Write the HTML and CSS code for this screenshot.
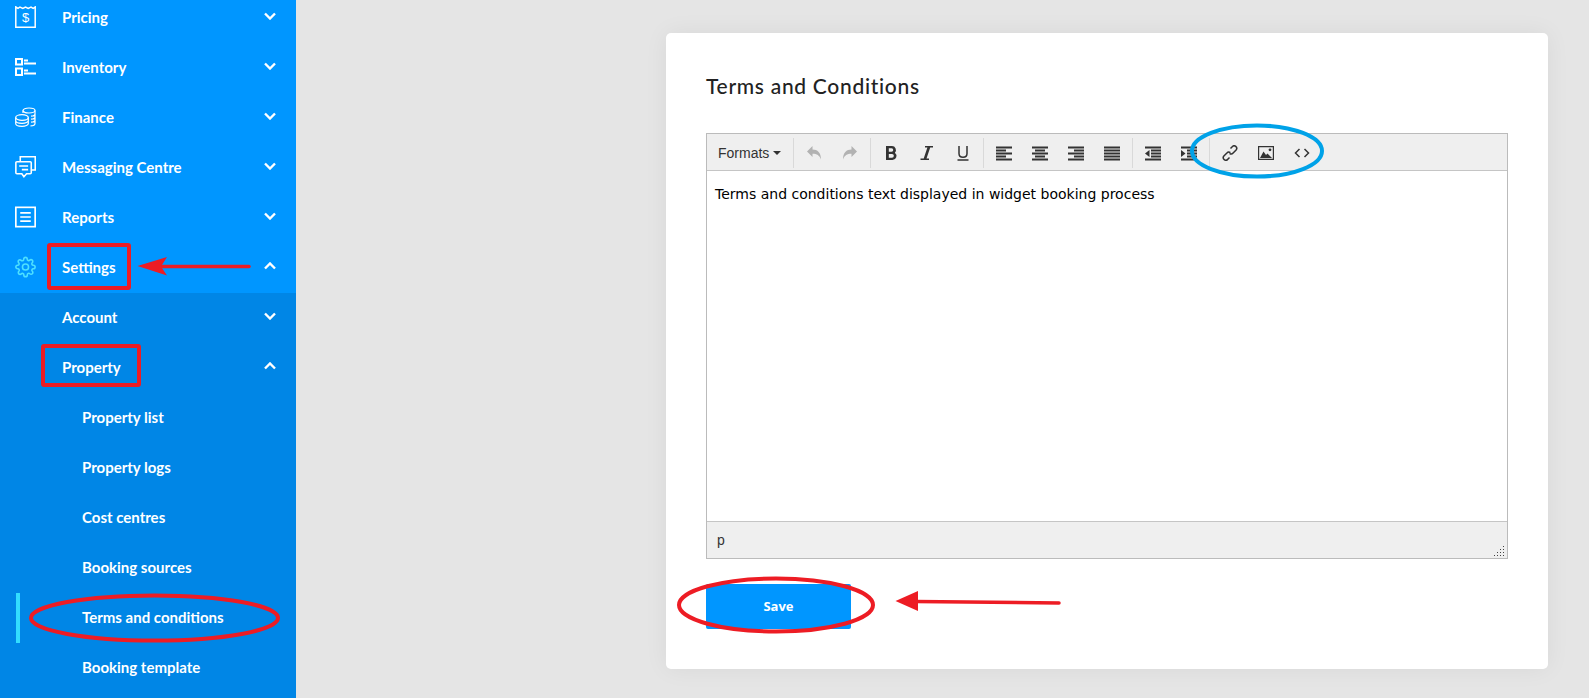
FILE: index.html
```html
<!DOCTYPE html>
<html lang="en">
<head>
<meta charset="utf-8">
<title>Terms and Conditions</title>
<link rel="stylesheet" href="styles.css">
</head>
<body>
<svg class="defs" width="0" height="0" aria-hidden="true">
  <symbol id="chev-down" viewBox="0 0 12 8"><path d="M1 1.500l5 5 5-5" fill="none" stroke="#fff" stroke-width="2.400"/></symbol>
  <symbol id="chev-up" viewBox="0 0 12 8"><path d="M1 6.500l5-5 5 5" fill="none" stroke="#fff" stroke-width="2.400"/></symbol>
</svg>
<div class="app">
  <nav class="sidebar">
    <ul class="menu">
      <li class="row">
        <svg class="ico" viewBox="0 0 21 22" fill="none" stroke="#fff" stroke-width="1.500"><path d="M.8 1l2.200 1.400L5 1l2.800 1.400L10.500 1l2.700 1.400L16 1l2.200 1.400L20.200 1v20.200H.8z"/><text x="10.500" y="15.500" class="dollar">$</text></svg>
        <span>Pricing</span><svg class="chev"><use href="#chev-down"/></svg>
      </li>
      <li class="row">
        <svg class="ico" viewBox="0 0 21 18" fill="none" stroke="#fff" stroke-width="2"><rect x="1" y="1" width="6" height="5.500"/><rect x="1" y="10.500" width="6" height="6.500"/><path d="M9 2.500h4M9 5.500h12M9 12.500h4M9 15.500h12"/></svg>
        <span>Inventory</span><svg class="chev"><use href="#chev-down"/></svg>
      </li>
      <li class="row">
        <svg class="ico" viewBox="0 0 21 19" fill="none" stroke="#fff" stroke-width="1.200"><ellipse cx="14" cy="3" rx="6" ry="2.500"/><path d="M20 3v13c0 1.500-2 2.400-4.500 2.400M8 5.400V3M20 6.500c0 1-1.500 2-4 2.200M20 9.500c0 1-1.500 2-4 2.200M20 12.500c0 1-1.500 2-4 2.200"/><ellipse cx="7" cy="10" rx="6.300" ry="2.800"/><path d="M.7 10v6c0 1.600 2.800 2.800 6.300 2.800s6.300-1.200 6.300-2.800v-6M.7 13c0 1.600 2.800 2.800 6.300 2.800s6.300-1.200 6.300-2.800"/></svg>
        <span>Finance</span><svg class="chev"><use href="#chev-down"/></svg>
      </li>
      <li class="row">
        <svg class="ico" viewBox="0 0 20 21" fill="none" stroke="#fff" stroke-width="1.500"><path d="M5 5V.8h14.300v12.500H16"/><path d="M1.800 5.500h12.700a1 1 0 0 1 1 1v9.500a1 1 0 0 1-1 1H11l-2.500 2.800L6.500 17H1.800a1 1 0 0 1-1-1V6.500a1 1 0 0 1 1-1z"/><path d="M4 9.500h8.500M6.500 13h6"/></svg>
        <span>Messaging Centre</span><svg class="chev"><use href="#chev-down"/></svg>
      </li>
      <li class="row">
        <svg class="ico" viewBox="0 0 20 20" fill="none" stroke="#fff" stroke-width="1.600"><rect x=".8" y=".8" width="18.400" height="18.400"/><path d="M5 6h10M5 10h10M5 14h10"/></svg>
        <span>Reports</span><svg class="chev"><use href="#chev-down"/></svg>
      </li>
      <li class="row">
        <svg class="ico" viewBox="0 0 24 24" fill="none" stroke="#4de0ff" stroke-width="1.800"><circle cx="12" cy="12" r="3.500"/><path d="M19.400 15a1.650 1.650 0 0 0 .33 1.820l.06.06a2 2 0 1 1-2.830 2.830l-.06-.06a1.650 1.650 0 0 0-2.820 1.170V21a2 2 0 1 1-4 0v-.09a1.650 1.650 0 0 0-2.820-1.170l-.06.06a2 2 0 1 1-2.830-2.830l.06-.06a1.650 1.650 0 0 0-1.170-2.820H3a2 2 0 1 1 0-4h.09a1.650 1.650 0 0 0 1.170-2.820l-.06-.06a2 2 0 1 1 2.830-2.830l.06.06a1.650 1.650 0 0 0 1.820.33H9a1.650 1.650 0 0 0 1-1.510V3a2 2 0 1 1 4 0v.09a1.650 1.650 0 0 0 2.820 1.170l.06-.06a2 2 0 1 1 2.830 2.830l-.06.06a1.650 1.650 0 0 0-.33 1.820V9a1.650 1.650 0 0 0 1.510 1H21a2 2 0 1 1 0 4h-.09a1.650 1.650 0 0 0-1.510 1z"/></svg>
        <span>Settings</span><svg class="chev"><use href="#chev-up"/></svg>
      </li>
    </ul>
    <ul class="submenu">
      <li class="row sub"><span>Account</span><svg class="chev"><use href="#chev-down"/></svg></li>
      <li class="row sub"><span>Property</span><svg class="chev"><use href="#chev-up"/></svg></li>
      <li class="row leaf"><span>Property list</span></li>
      <li class="row leaf"><span>Property logs</span></li>
      <li class="row leaf"><span>Cost centres</span></li>
      <li class="row leaf"><span>Booking sources</span></li>
      <li class="row leaf active"><span>Terms and conditions</span></li>
      <li class="row leaf"><span>Booking template</span></li>
    </ul>
  </nav>
  <main class="main">
    <section class="card">
      <h1 class="title">Terms and Conditions</h1>
      <div class="editor">
        <div class="toolbar">
          <div class="group formats"><span>Formats</span><i class="caret"></i></div>
          <div class="group">
            <span class="btn"><svg class="ti" viewBox="0 0 16 16" fill="#b2b2b2"><path d="M1 6.500L6.500 1v3.500C11.500 4.500 15 7.500 15 14.500c-1.500-4-4-5.700-8.500-5.700V12z"/></svg></span>
            <span class="btn"><svg class="ti" viewBox="0 0 16 16" fill="#b2b2b2"><path d="M15 6.500L9.500 1v3.500C4.500 4.500 1 7.500 1 14.500c1.500-4 4-5.700 8.500-5.700V12z"/></svg></span>
          </div>
          <div class="group">
            <span class="btn"><svg class="ti" viewBox="0 0 16 16" fill="#333"><path fill-rule="evenodd" d="M3 1h6a4 4 0 0 1 2.900 6.700A4.100 4.100 0 0 1 9.500 15H3zM5.800 3.300v3.500H8.500a1.750 1.750 0 0 0 0-3.500zM5.800 9v3.700H9a1.850 1.850 0 0 0 0-3.700z"/></svg></span>
            <span class="btn"><svg class="ti" viewBox="0 0 16 16" fill="#333"><path d="M6 1h8v1.500h-2.800L7.500 13.500H10V15H1.500v-1.500h3.200L8.400 2.500H6z"/></svg></span>
            <span class="btn"><svg class="ti" viewBox="0 0 16 16" fill="none" stroke="#333" stroke-width="1.500"><path d="M4 1v7.500c0 5 8 5 8 0V1M2.500 15h11"/></svg></span>
          </div>
          <div class="group">
            <span class="btn"><svg class="ti" viewBox="0 0 16 16"><path class="ln" d="M0 2.500h16M0 5.500h10M0 8.500h16M0 11.500h10M0 14.500h16"/></svg></span>
            <span class="btn"><svg class="ti" viewBox="0 0 16 16"><path class="ln" d="M0 2.500h16M3 5.500h10M0 8.500h16M3 11.500h10M0 14.500h16"/></svg></span>
            <span class="btn"><svg class="ti" viewBox="0 0 16 16"><path class="ln" d="M0 2.500h16M6 5.500h10M0 8.500h16M6 11.500h10M0 14.500h16"/></svg></span>
            <span class="btn"><svg class="ti" viewBox="0 0 16 16"><path class="ln" d="M0 2.500h16M0 5.500h16M0 8.500h16M0 11.500h16M0 14.500h16"/></svg></span>
          </div>
          <div class="group">
            <span class="btn"><svg class="ti" viewBox="0 0 16 16"><path class="ln" d="M0 2.500h16M6 5.500h10M6 8.500h10M6 11.500h10M0 14.500h16"/><path d="M4.500 5v7L0 8.500z" fill="#333"/></svg></span>
            <span class="btn"><svg class="ti" viewBox="0 0 16 16"><path class="ln" d="M0 2.500h16M6 5.500h10M6 8.500h10M6 11.500h10M0 14.500h16"/><path d="M0 5v7l4.500-3.500z" fill="#333"/></svg></span>
          </div>
          <div class="group">
            <span class="btn"><svg class="ti" viewBox="0 0 16 16" fill="none" stroke="#333" stroke-width="1.500"><path d="M8.500 3.500l1.700-1.700a2.500 2.500 0 0 1 3.900 3.200l-3 3a2.500 2.500 0 0 1-3.500.3"/><path d="M7.500 12.500l-1.700 1.700a2.500 2.500 0 0 1-3.900-3.200l3-3a2.500 2.500 0 0 1 3.500-.3"/></svg></span>
            <span class="btn"><svg class="ti" viewBox="0 0 16 16"><path fill-rule="evenodd" fill="#333" d="M0 1h16v14H0zM1.200 2.200v11.600h13.600V2.200z"/><path fill="#333" d="M2 13l3.500-6.500L8 10l1.500-1.500L14 13z"/><circle cx="12" cy="4.800" r="1.400" fill="#333"/></svg></span>
            <span class="btn"><svg class="ti" viewBox="0 0 16 16" fill="none" stroke="#333" stroke-width="1.500"><path d="M5.500 4L1.500 8l4 4M10.500 4l4 4-4 4"/></svg></span>
          </div>
        </div>
        <div class="content">Terms and conditions text displayed in widget booking process</div>
        <div class="statusbar"><span>p</span><i class="grip"></i></div>
      </div>
      <button class="save" type="button">Save</button>
    </section>
  </main>
</div>
<svg class="marks" viewBox="0 0 1589 698" width="1589" height="698" aria-hidden="true">
  <g fill="none" stroke="#ed1c24" stroke-width="4">
    <rect x="49" y="245" width="80" height="43" rx="1"/>
    <rect x="43" y="346" width="96" height="39" rx="1"/>
    <ellipse cx="154.500" cy="618" rx="123.500" ry="22.500"/>
    <ellipse cx="776" cy="605" rx="97" ry="26.500"/>
  </g>
  <g fill="none" stroke="#ed1c24" stroke-width="3.500" stroke-linecap="round">
    <path d="M160 266.500H249"/>
    <path d="M915 601.500L1059 603"/>
  </g>
  <path d="M137.500 266L167 257l-6 9.500 6 9z" fill="#ed1c24"/>
  <path d="M895.500 601L918 591v20z" fill="#ed1c24"/>
  <ellipse cx="1257" cy="151" rx="65" ry="25.500" fill="none" stroke="#00a2e8" stroke-width="4"/>
</svg>
</body>
</html>
```
FILE: styles.css
```css
* { box-sizing: border-box; }
html, body { margin: 0; height: 698px; overflow: hidden; background: #e5e5e5; }
body { position: relative; font-family: "Lato", "Liberation Sans", sans-serif; }
.defs { position: absolute; }
.app { display: flex; height: 698px; }

.sidebar { width: 296px; flex: none; height: 698px; overflow: hidden; background: #0096ff; color: #fff; }
.menu, .submenu { list-style: none; margin: 0; padding: 0; }
.menu { margin-top: -7px; }
.submenu { background: #0086e6; height: 420px; }
.row { position: relative; display: flex; align-items: center; height: 50px; font-size: 15px; font-weight: 700; padding-right: 20px; }
.row > span { flex: 1; padding-bottom: 2px; }
.ico { width: 21px; height: 22px; margin: -2px 26px 0 15px; flex: none; }
.dollar { font: 400 13px "Liberation Sans", sans-serif; fill: #fff; stroke: none; text-anchor: middle; }
.chev { width: 12px; height: 8px; flex: none; margin-top: -5px; }
.sub { padding-left: 62px; }
.leaf { padding-left: 82px; }
.active::before { content: ""; position: absolute; left: 16px; top: 0; bottom: 0; width: 4px; background: #33ddff; }

.main { flex: 1; padding: 33px 43px 29px 370px; }
.card { height: 636px; background: #fff; border-radius: 5px; box-shadow: 0 0 24px rgba(0, 0, 0, .06); padding: 40px 40px 40px; }
.title { margin: 0 0 34px; font-size: 21px; letter-spacing: .7px; line-height: 26px; font-weight: 500; color: #222; font-family: "Lato", sans-serif; }

.editor { width: 802px; border: 1px solid #bbb; background: #fff; display: flex; flex-direction: column; height: 426px; }
.toolbar { display: flex; align-items: center; height: 37px; padding-top: 1px; background: #efefef; border-bottom: 1px solid #c5c5c5; flex: none; }
.group { display: flex; align-items: center; height: 30px; padding: 0 2px; border-left: 1px solid #d9d9d9; }
.formats { width: 86px; border-left: 0; padding-left: 11px; font: 14px "Liberation Sans", sans-serif; color: #333; }
.caret { width: 0; height: 0; margin-left: 4px; border: 4px solid transparent; border-top-color: #333; border-bottom: 0; }
.btn { width: 36px; height: 30px; display: flex; align-items: center; justify-content: center; }
.ti { width: 16px; height: 16px; display: block; }
.ln { fill: none; stroke: #333; stroke-width: 1.800; }
.content { flex: 1; padding: 13px 8px 0; font: 14px/20px "DejaVu Sans", Verdana, sans-serif; color: #000; }
.statusbar { position: relative; height: 37px; flex: none; background: #efefef; border-top: 1px solid #c5c5c5; padding: 8px 10px; font: 14px/20px "Liberation Sans", sans-serif; color: #333; }
.grip { position: absolute; right: 3px; bottom: 2px; width: 11px; height: 11px; background: radial-gradient(circle, #444 0 .8px, transparent .9px) 0 0 / 3px 3px; clip-path: polygon(100% 0, 100% 100%, 0 100%); }

.save { display: block; margin-top: 25px; padding-top: 0; width: 145px; height: 45px; border: 0; border-radius: 2px; background: #0096ff; color: #fff; font: 700 13px "Open Sans", sans-serif; }

.marks { position: absolute; left: 0; top: 0; pointer-events: none; }
```
